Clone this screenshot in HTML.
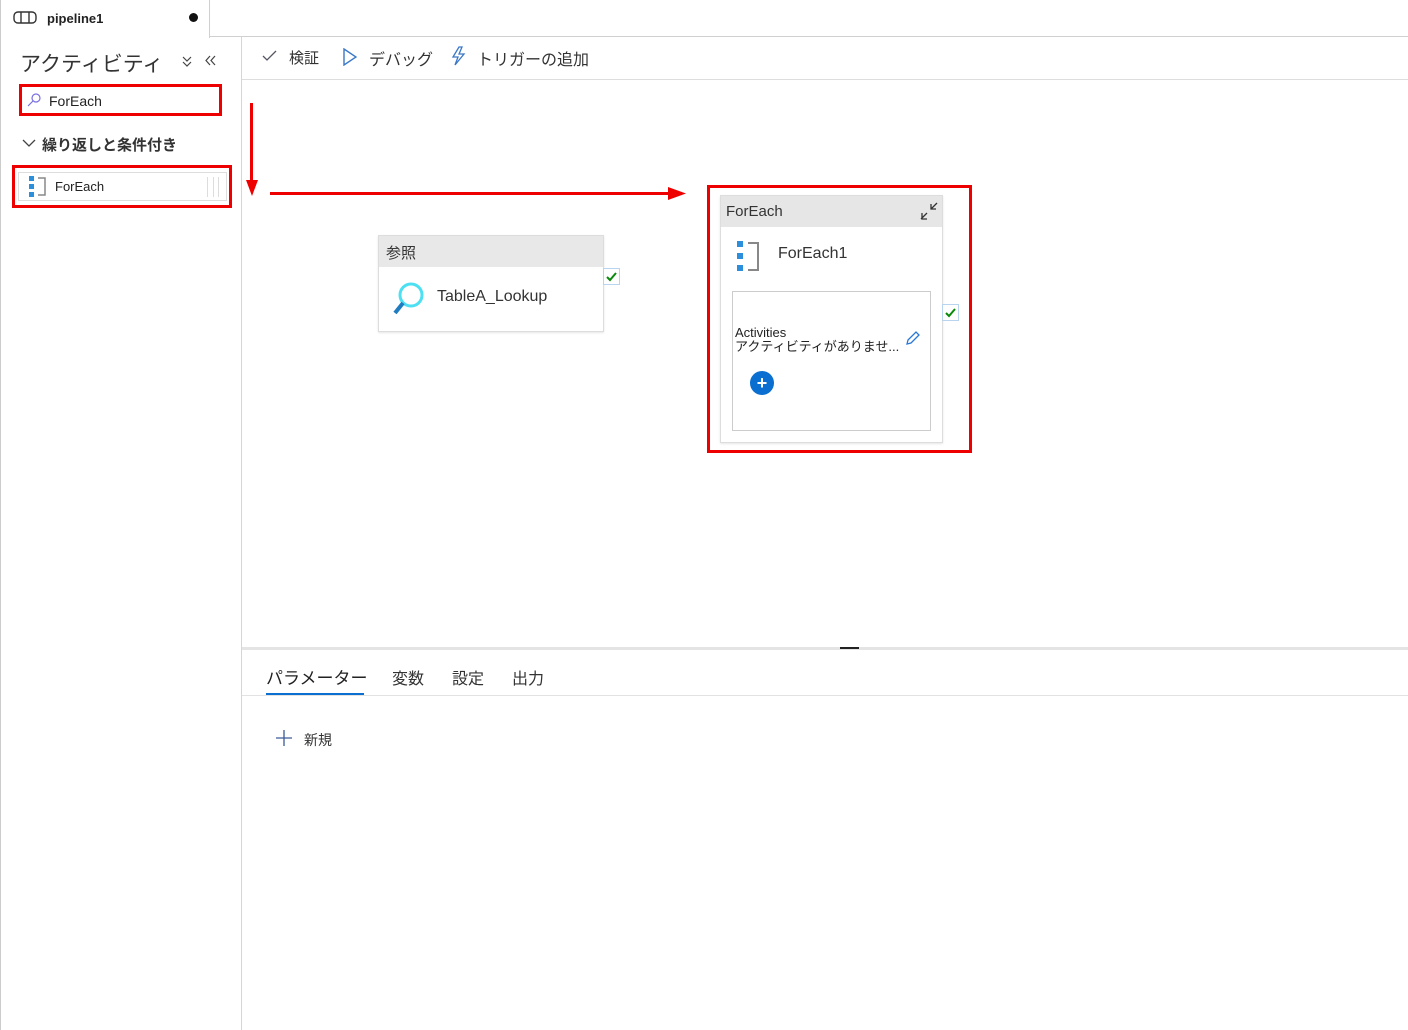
<!DOCTYPE html>
<html><head><meta charset="utf-8"><style>
*{margin:0;padding:0;box-sizing:border-box}
body{width:1408px;height:1030px;background:#fff;position:relative;overflow:hidden;font-family:"Liberation Sans","Noto Sans CJK JP",sans-serif;color:#222}
.a{position:absolute}
.red{position:absolute;border:3px solid #e00}
</style></head><body>
<div class="a" style="left:0;top:0;width:1408px;height:37px;border-bottom:1px solid #d0d0d0"></div>
<div class="a" style="left:0;top:0;width:210px;height:38px;background:#fff;border-left:1px solid #ccc;border-right:1px solid #d0d0d0"></div>
<svg class="a" style="left:13px;top:10px" width="24" height="16" viewBox="0 0 24 16"><rect x="1" y="2" width="22" height="11" rx="4" fill="none" stroke="#333" stroke-width="1.4"/><line x1="8" y1="2" x2="8" y2="13" stroke="#333" stroke-width="1.4"/><line x1="16" y1="2" x2="16" y2="13" stroke="#333" stroke-width="1.4"/></svg>
<div class="a" style="left:47px;top:11px;font-size:13px;font-weight:bold;color:#222">pipeline1</div>
<div class="a" style="left:189px;top:13px;width:9px;height:9px;border-radius:50%;background:#111"></div>
<div class="a" style="left:0;top:37px;width:1px;height:993px;background:#ccc"></div>
<div class="a" style="left:241px;top:37px;width:1px;height:993px;background:#d6d6d6"></div>
<div class="a" style="left:20px;top:48px;font-size:21px;color:#333">アクティビティ</div>
<svg class="a" style="left:182px;top:56px" width="10" height="11"><path d="M1 1l4 4 4-4M1 6l4 4 4-4" fill="none" stroke="#444" stroke-width="1.2"/></svg>
<svg class="a" style="left:205px;top:55px" width="11" height="11"><path d="M5 1L1 5.5 5 10M10 1L6 5.5 10 10" fill="none" stroke="#444" stroke-width="1.2"/></svg>
<div class="red" style="left:19px;top:84px;width:203px;height:32px"></div>
<svg class="a" style="left:27px;top:93px" width="14" height="14"><circle cx="9" cy="5" r="4" fill="none" stroke="#7a6fe0" stroke-width="1.2"/><line x1="6" y1="8" x2="1" y2="13" stroke="#7a6fe0" stroke-width="1.2"/></svg>
<div class="a" style="left:49px;top:93px;font-size:14px;color:#222">ForEach</div>
<svg class="a" style="left:22px;top:139px" width="14" height="9"><path d="M1 1l6 6 6-6" fill="none" stroke="#444" stroke-width="1.3"/></svg>
<div class="a" style="left:42px;top:134px;font-size:15px;font-weight:bold;color:#333">繰り返しと条件付き</div>
<div class="red" style="left:12px;top:165px;width:220px;height:43px"></div>
<div class="a" style="left:18px;top:172px;width:209px;height:29px;border:1px solid #ddd"></div>
<svg class="a" style="left:29px;top:176px" width="18" height="22"><rect x="0" y="0" width="5" height="5" fill="#2c8fdc"/><rect x="0" y="8" width="5" height="5" fill="#2c8fdc"/><rect x="0" y="16" width="5" height="5" fill="#2c8fdc"/><path d="M9 2h7v17h-7" fill="none" stroke="#888" stroke-width="1.5"/></svg>
<div class="a" style="left:55px;top:179px;font-size:13px;color:#222">ForEach</div>
<div class="a" style="left:207px;top:177px;width:12px;height:20px;border-left:1px solid #ddd;border-right:1px solid #ddd"></div>
<div class="a" style="left:213px;top:177px;width:1px;height:20px;background:#ddd"></div>
<div class="a" style="left:242px;top:79px;width:1166px;height:1px;background:#ddd"></div>
<svg class="a" style="left:262px;top:50px" width="15" height="12"><path d="M1 6l4 4 9-9" fill="none" stroke="#556" stroke-width="1.3"/></svg>
<div class="a" style="left:289px;top:47px;font-size:15px;color:#333">検証</div>
<svg class="a" style="left:343px;top:48px" width="14" height="18"><path d="M1 1L13 9L1 17Z" fill="none" stroke="#3a78c8" stroke-width="1.4"/></svg>
<div class="a" style="left:369px;top:46px;font-size:16px;color:#333">デバッグ</div>
<svg class="a" style="left:450px;top:46px" width="18" height="20"><path d="M9 1L3 11h5l-3 8 9-11h-5l3-7z" fill="none" stroke="#3a78c8" stroke-width="1.3"/></svg>
<div class="a" style="left:477px;top:46px;font-size:16px;color:#333">トリガーの追加</div>
<div class="a" style="left:250px;top:103px;width:3px;height:80px;background:#e00"></div>
<svg class="a" style="left:246px;top:180px" width="12" height="16"><path d="M0 0L6 16L12 0Z" fill="#e00"/></svg>
<div class="a" style="left:270px;top:192px;width:400px;height:3px;background:#e00"></div>
<svg class="a" style="left:668px;top:187px" width="18" height="13"><path d="M0 0L18 6.5L0 13Z" fill="#e00"/></svg>
<div class="a" style="left:378px;top:235px;width:226px;height:97px;border:1px solid #ddd;box-shadow:0 1px 2px rgba(0,0,0,.1)"></div>
<div class="a" style="left:379px;top:236px;width:224px;height:31px;background:#e8e8e8"></div>
<div class="a" style="left:386px;top:242px;font-size:15px;color:#333">参照</div>
<svg class="a" style="left:392px;top:281px" width="36" height="34"><circle cx="19" cy="14" r="11" fill="none" stroke="#4de0f2" stroke-width="3"/><line x1="11" y1="22" x2="3" y2="32" stroke="#1f7cc0" stroke-width="4"/></svg>
<div class="a" style="left:437px;top:288px;font-size:16px;color:#333">TableA_Lookup</div>
<div class="a" style="left:603px;top:268px;width:17px;height:17px;border:1px solid #b8d4ee;background:#fff"><svg width="15" height="15" style="display:block"><path d="M3 8l3 3 6-7" fill="none" stroke="#0a8a0a" stroke-width="2"/></svg></div>
<div class="red" style="left:707px;top:185px;width:265px;height:268px"></div>
<div class="a" style="left:720px;top:195px;width:223px;height:248px;border:1px solid #ddd;box-shadow:0 1px 2px rgba(0,0,0,.1)"></div>
<div class="a" style="left:721px;top:196px;width:221px;height:31px;background:#e6e6e6"></div>
<div class="a" style="left:726px;top:203px;font-size:15px;color:#333">ForEach</div>
<svg class="a" style="left:919px;top:201px" width="20" height="20"><path d="M2 18l6-6M3 12v6h5M18 2l-6 6M17 8h-5V3" fill="none" stroke="#333" stroke-width="1.3"/></svg>
<svg class="a" style="left:737px;top:240px" width="24" height="32"><rect x="0" y="1" width="6" height="6" fill="#2c8fdc"/><rect x="0" y="13" width="6" height="6" fill="#2c8fdc"/><rect x="0" y="25" width="6" height="6" fill="#2c8fdc"/><path d="M11 3h10v27h-10" fill="none" stroke="#888" stroke-width="2"/></svg>
<div class="a" style="left:778px;top:245px;font-size:16px;color:#333">ForEach1</div>
<div class="a" style="left:732px;top:291px;width:199px;height:140px;border:1px solid #ccc"></div>
<div class="a" style="left:735px;top:326px;font-size:13px;color:#222;line-height:14px">Activities<br>アクティビティがありませ...</div>
<svg class="a" style="left:905px;top:330px" width="16" height="16"><path d="M2 14l1-4 8-8 3 3-8 8z" fill="none" stroke="#2a78d6" stroke-width="1.3"/></svg>
<div class="a" style="left:750px;top:371px;width:24px;height:24px;border-radius:50%;background:#0a6fd0;color:#fff;font-size:18px;font-weight:bold;line-height:24px;text-align:center">+</div>
<div class="a" style="left:942px;top:304px;width:17px;height:17px;border:1px solid #b8d4ee;background:#fff"><svg width="15" height="15" style="display:block"><path d="M3 8l3 3 6-7" fill="none" stroke="#0a8a0a" stroke-width="2"/></svg></div>
<div class="a" style="left:242px;top:647px;width:1166px;height:3px;background:#e4e4e4"></div>
<div class="a" style="left:840px;top:647px;width:19px;height:2px;background:#222"></div>
<div class="a" style="left:266px;top:664px;font-size:17px;color:#222">パラメーター</div>
<div class="a" style="left:266px;top:693px;width:98px;height:3px;background:#0a6fd0"></div>
<div class="a" style="left:392px;top:665px;font-size:16px;color:#333">変数</div>
<div class="a" style="left:452px;top:665px;font-size:16px;color:#333">設定</div>
<div class="a" style="left:512px;top:665px;font-size:16px;color:#333">出力</div>
<div class="a" style="left:242px;top:695px;width:1166px;height:1px;background:#e2e2e2"></div>
<svg class="a" style="left:275px;top:729px" width="18" height="18"><path d="M9 1v16M1 9h16" stroke="#3a5a9a" stroke-width="1.3"/></svg>
<div class="a" style="left:304px;top:730px;font-size:14px;color:#333">新規</div>
</body></html>
